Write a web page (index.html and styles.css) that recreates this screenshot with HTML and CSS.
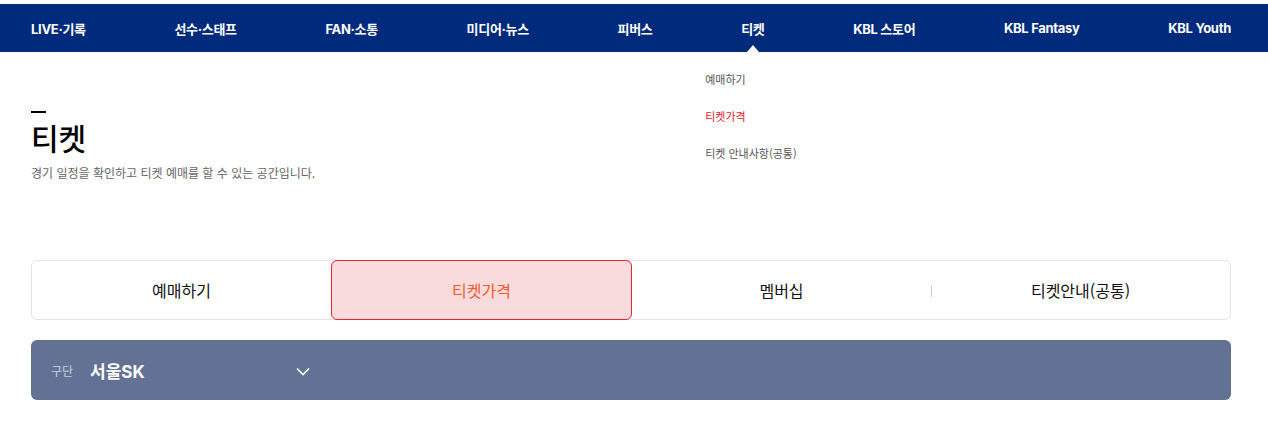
FILE: index.html
```html
<!DOCTYPE html>
<html lang="ko">
<head>
    <meta charset="UTF-8">
    <title>티켓 - KBL</title>
    <link rel="stylesheet" href="styles.css">
</head>
<body>
<div id="gnb">
    <ul class="gnb-list">
        <li><a href="#">LIVE·기록</a></li>
        <li><a href="#">선수·스태프</a></li>
        <li><a href="#">FAN·소통</a></li>
        <li><a href="#">미디어·뉴스</a></li>
        <li><a href="#">피버스</a></li>
        <li class="on">
            <a href="#">티켓</a>
            <ul class="sub-menu">
                <li><a href="#">예매하기</a></li>
                <li class="on"><a href="#">티켓가격</a></li>
                <li><a href="#">티켓 안내사항(공통)</a></li>
            </ul>
        </li>
        <li><a href="#">KBL 스토어</a></li>
        <li><a href="#">KBL Fantasy</a></li>
        <li><a href="#">KBL Youth</a></li>
    </ul>
</div>

<div id="container">
    <div class="page-title">
        <h2>티켓</h2>
        <p>경기 일정을 확인하고 티켓 예매를 할 수 있는 공간입니다.</p>
    </div>

    <ul class="tab-menu">
        <li><a href="#">예매하기</a></li>
        <li class="on"><a href="#">티켓가격</a></li>
        <li><a href="#">멤버십</a></li>
        <li class="line"><a href="#">티켓안내(공통)</a></li>
    </ul>

    <div class="team-select">
        <span class="label">구단</span>
        <span class="team">서울SK</span>
        <svg class="arrow" width="14" height="9" viewBox="0 0 14 9">
            <path d="M1 1.5 L7 7.5 L13 1.5" fill="none" stroke="#fff" stroke-width="1.6"/>
        </svg>
    </div>
</div>
</body>
</html>
```

FILE: styles.css
```css
*{
    margin: 0;
    padding: 0;
    box-sizing: border-box;
}
ul{
    list-style: none;
}
a{
    color: inherit;
    text-decoration: none;
}
body{
    background: #fff;
    font-family: "Noto Sans CJK KR", "Noto Sans", sans-serif;
    color: #111;
    padding-top: 4px;
}
#gnb{
    background: #002a7b;
    height: 48px;
}
.gnb-list{
    width: 1200px;
    margin-left: 31px;
    height: 48px;
    display: flex;
    justify-content: space-between;
    align-items: center;
}
.gnb-list > li{
    position: relative;
    height: 48px;
    display: flex;
    align-items: center;
}
.gnb-list > li > a{
    color: #fff;
    font-family: Inter, "Noto Sans CJK KR", sans-serif;
    font-size: 13px;
    font-weight: 700;
    letter-spacing: -0.3px;
}
.gnb-list > li.on::after{
    content: "";
    position: absolute;
    left: 50%;
    bottom: 0;
    margin-left: -6px;
    border-left: 6px solid transparent;
    border-right: 6px solid transparent;
    border-bottom: 7px solid #fff;
}
.sub-menu{
    position: absolute;
    top: 48px;
    left: -36px;
    width: 160px;
    padding-top: 19px;
}
.sub-menu li{
    height: 37px;
    font-size: 11px;
    color: #555;
    white-space: nowrap;
}
.sub-menu li.on{
    color: #e8202b;
}

#container{
    width: 1200px;
    margin-left: 31px;
}
.page-title{
    padding-top: 59px;
    height: 208px;
}
.page-title h2{
    position: relative;
    font-size: 30px;
    font-weight: 500;
    line-height: 40px;
    padding-top: 6px;
    color: #000;
}
.page-title h2::before{
    content: "";
    position: absolute;
    left: 0;
    top: 0;
    width: 15px;
    height: 2px;
    background: #000;
}
.page-title p{
    margin-top: 7px;
    font-size: 12px;
    color: #666;
}
.tab-menu{
    display: flex;
    height: 60px;
    border: 1px solid #e3e3e3;
    border-radius: 6px;
}
.tab-menu li{
    flex: 1;
    display: flex;
    align-items: center;
    justify-content: center;
    font-size: 16px;
    color: #111;
    position: relative;
}
.tab-menu li.on{
    margin: -1px 0;
    background: #fadbdd;
    border: 1px solid #e8262f;
    border-radius: 6px;
    color: #f2592a;
}
.tab-menu li.line::before{
    content: "";
    position: absolute;
    left: 0;
    top: 24px;
    width: 1px;
    height: 12px;
    background: #ccc;
}
.team-select{
    margin-top: 20px;
    height: 60px;
    background: #637294;
    border-radius: 6px;
    display: flex;
    align-items: center;
    padding-left: 20px;
    position: relative;
}
.team-select .label{
    font-size: 12px;
    color: #c9cfdf;
    margin-right: 17px;
}
.team-select .team{
    font-family: Inter, "Noto Sans CJK KR", sans-serif;
    font-size: 17px;
    font-weight: 700;
    color: #fff;
    width: 206px;
}
.team-select .arrow{
    display: block;
    margin-top: 2px;
}
```
